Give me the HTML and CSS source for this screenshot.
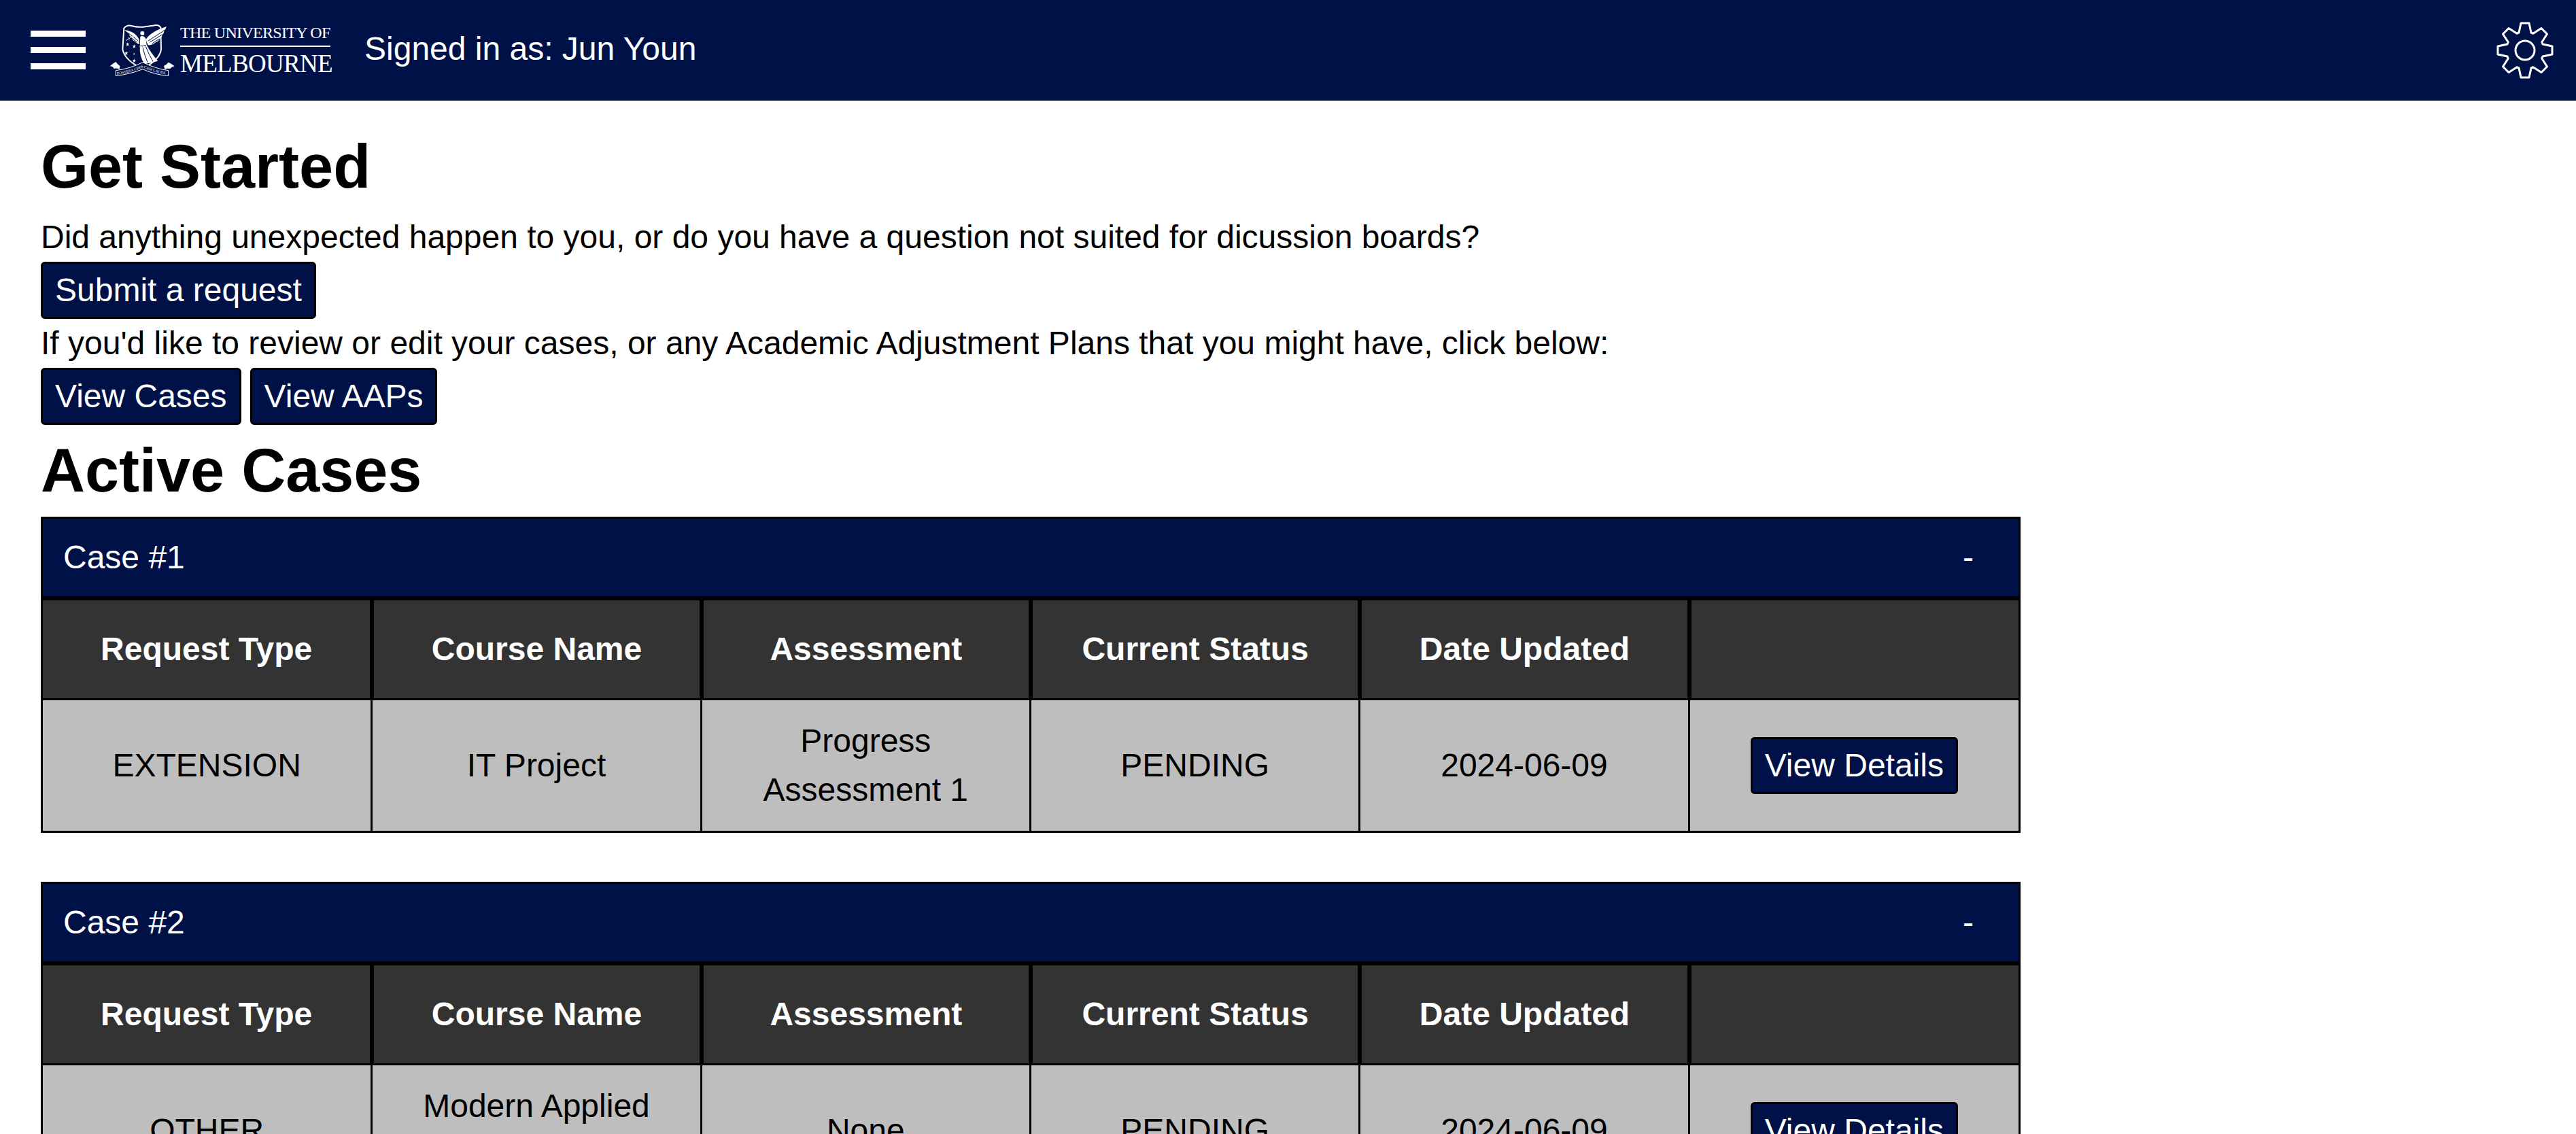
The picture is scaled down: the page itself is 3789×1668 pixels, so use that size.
FILE: index.html
```html
<!DOCTYPE html>
<html lang="en">
  <head>
    <meta charset="UTF-8" />
    <meta name="viewport" content="width=device-width, initial-scale=1.0" />
    <title>Home | Special Consideration</title>
    <link rel="stylesheet" href="styles.css">
  </head>

  <body>
    <header class="topbar">
      <div class="topbar-left">
        <button class="menu-btn" aria-label="Menu">
          <span></span>
          <span></span>
          <span></span>
        </button>
        <div class="logo">
          <svg class="crest" viewBox="15 25 300 240" aria-hidden="true">
            <!-- shield -->
            <path class="crest-line" d="M82 48 Q96 30 118 38 Q140 44 165 42 Q200 38 222 34 Q236 32 244 44 L246 140 Q242 185 165 226 Q85 190 76 140 Z" />
            <!-- wings -->
            <path class="crest-fill" d="M178 98 Q200 62 270 40 Q266 52 258 60 Q262 64 250 78 Q252 82 238 96 Q236 104 222 110 Q208 124 188 122 Z" />
            <path class="crest-fill" d="M150 100 Q132 60 84 56 Q98 66 104 72 Q104 80 114 88 Q118 100 130 106 Q140 116 150 118 Z" />
            <path class="crest-cut" d="M188 104 L262 56 M196 110 L250 76 M206 116 L238 94 M146 104 L100 68 M140 110 L112 88" />
            <!-- figure -->
            <circle class="crest-fill" cx="163" cy="70" r="9" />
            <path class="crest-fill" d="M154 84 Q168 78 178 92 L182 120 Q196 150 232 192 Q204 200 172 206 Q150 170 152 130 Z" />
            <path class="crest-cut" d="M165 132 Q172 165 186 198 M178 128 Q190 160 210 194 M154 126 Q165 128 180 122" />
            <path class="crest-branch" d="M92 102 L128 76 M100 88 L108 96 M112 80 L118 88" />
            <!-- stars -->
            <path class="crest-fill" d="M98 110l2 6 6 0-5 4 2 7-5-4-5 4 2-7-5-4 6 0z M127 119l2 6 6 0-5 4 2 7-5-4-5 4 2-7-5-4 6 0z M92 149l2 6 6 0-5 4 2 7-5-4-5 4 2-7-5-4 6 0z M127 182l2 6 6 0-5 4 2 7-5-4-5 4 2-7-5-4 6 0z M127 156l1 3 3 0-2 2 1 4-3-2-3 2 1-4-2-2 3 0z" />
            <!-- motto scroll -->
            <path class="crest-fill" d="M20 215 Q32 204 46 196 Q52 206 64 214 L62 228 Q48 222 38 226 Q34 216 20 215 Z" />
            <path class="crest-fill" d="M305 215 Q290 202 278 198 Q270 208 258 214 L262 228 Q276 224 286 226 Q292 216 305 215 Z" />
            <path class="crest-band" d="M46 234 Q110 226 165 198 Q220 226 278 234 L278 258 Q215 252 165 228 Q110 250 46 258 Z" />
            <path id="motto-curve" class="crest-guide" d="M52 253 Q112 244 165 221 Q218 244 276 253" />
            <text class="crest-motto"><textPath href="#motto-curve">POSTERA CRESCAM LAUDE</textPath></text>
          </svg>
          <div class="wordmark">
            <span class="wordmark-top">THE UNIVERSITY OF</span>
            <span class="wordmark-bottom">MELBOURNE</span>
          </div>
        </div>
        <span class="signed-in">Signed in as: Jun Youn</span>
      </div>
      <button class="settings-btn" aria-label="Settings">
        <svg viewBox="-42 -42 84 84" aria-hidden="true">
          <circle cx="0" cy="0" r="14" />
          <path d="M-9 -26 L-6 -40 L6 -40 L9 -26 L12 -24.75 L24 -32.5 L32.5 -24 L24.75 -12 L26 -9 L40 -6 L40 6 L26 9 L24.75 12 L32.5 24 L24 32.5 L12 24.75 L9 26 L6 40 L-6 40 L-9 26 L-12 24.75 L-24 32.5 L-32.5 24 L-24.75 12 L-26 9 L-40 6 L-40 -6 L-26 -9 L-24.75 -12 L-32.5 -24 L-24 -32.5 L-12 -24.75 Z" />
        </svg>
      </button>
    </header>

    <main class="content">
      <h1>Get Started</h1>
      <p>Did anything unexpected happen to you, or do you have a question not suited for dicussion boards?</p>
      <div class="btn-row">
        <a href="#" class="btn">Submit a request</a>
      </div>
      <p>If you'd like to review or edit your cases, or any Academic Adjustment Plans that you might have, click below:</p>
      <div class="btn-row">
        <a href="#" class="btn">View Cases</a>
        <a href="#" class="btn">View AAPs</a>
      </div>
      <h1>Active Cases</h1>

      <section class="case">
        <div class="case-head">
          <span>Case #1</span>
          <span class="case-toggle">-</span>
        </div>
        <table>
          <thead>
            <tr>
              <th>Request Type</th>
              <th>Course Name</th>
              <th>Assessment</th>
              <th>Current Status</th>
              <th>Date Updated</th>
              <th></th>
            </tr>
          </thead>
          <tbody>
            <tr>
              <td>EXTENSION</td>
              <td>IT Project</td>
              <td>Progress Assessment 1</td>
              <td>PENDING</td>
              <td>2024-06-09</td>
              <td><a href="#" class="btn">View Details</a></td>
            </tr>
          </tbody>
        </table>
      </section>

      <section class="case">
        <div class="case-head">
          <span>Case #2</span>
          <span class="case-toggle">-</span>
        </div>
        <table>
          <thead>
            <tr>
              <th>Request Type</th>
              <th>Course Name</th>
              <th>Assessment</th>
              <th>Current Status</th>
              <th>Date Updated</th>
              <th></th>
            </tr>
          </thead>
          <tbody>
            <tr>
              <td>OTHER</td>
              <td>Modern Applied Statistics</td>
              <td>None</td>
              <td>PENDING</td>
              <td>2024-06-09</td>
              <td><a href="#" class="btn">View Details</a></td>
            </tr>
          </tbody>
        </table>
      </section>
    </main>
  </body>
</html>
```

FILE: styles.css
```css
* {
  margin: 0;
  padding: 0;
  box-sizing: border-box;
}

html,
body {
  height: 100%;
  overflow: hidden;
}

body {
  font-family: "Liberation Sans", Arial, sans-serif;
  font-size: 48px;
  line-height: 1.5;
  color: #000;
  background-color: #fff;
}

.topbar {
  display: flex;
  justify-content: space-between;
  align-items: center;
  height: 148px;
  padding: 0 33px 1px 45px;
  background-color: #001147;
  color: #fff;
}

.topbar-left {
  display: flex;
  align-items: center;
}

.menu-btn {
  display: flex;
  flex-direction: column;
  gap: 15px;
  width: 81px;
  background: none;
  border: none;
}

.menu-btn span {
  display: block;
  height: 9px;
  background-color: #fff;
}

.logo {
  display: flex;
  align-items: center;
  margin-left: 34px;
}

.crest {
  width: 100px;
  height: 80px;
}

.crest-line {
  fill: none;
  stroke: #fff;
  stroke-width: 6;
}

.crest-fill {
  fill: #fff;
}

.crest-cut {
  fill: none;
  stroke: #001147;
  stroke-width: 3;
}

.crest-branch {
  fill: none;
  stroke: #fff;
  stroke-width: 3;
}

.crest-band {
  fill: #001147;
  stroke: #fff;
  stroke-width: 3;
}

.crest-guide {
  fill: none;
}

.crest-motto {
  font-family: "Liberation Serif", serif;
  font-size: 17px;
  fill: #fff;
}

.wordmark {
  display: flex;
  flex-direction: column;
  width: 221px;
  margin-left: 5px;
  padding-top: 2px;
  font-family: "Liberation Serif", "Times New Roman", serif;
  white-space: nowrap;
}

.wordmark-top {
  padding-bottom: 6px;
  border-bottom: 2px solid #fff;
  font-size: 24px;
  line-height: 26px;
  letter-spacing: -0.7px;
}

.wordmark-bottom {
  margin-top: 5px;
  font-size: 37px;
  line-height: 40px;
  letter-spacing: -0.7px;
}

.signed-in {
  margin-left: 50px;
  padding-bottom: 4px;
  line-height: 55px;
}

.settings-btn {
  display: flex;
  width: 84px;
  height: 84px;
  background: none;
  border: none;
}

.settings-btn svg {
  width: 84px;
  height: 84px;
  fill: none;
  stroke: #fff;
  stroke-width: 3;
  stroke-linejoin: round;
}

.content {
  padding: 30px 60px 0;
}

h1 {
  font-size: 90px;
}

.btn-row {
  display: flex;
  gap: 13px;
}

.btn {
  display: inline-block;
  vertical-align: top;
  padding: 11px 18px;
  background-color: #001147;
  border: 3px solid #000;
  border-radius: 6px;
  color: #fff;
  line-height: 56px;
  text-decoration: none;
}

.case {
  width: 2912px;
  margin-bottom: 72px;
  border: 3px solid #000;
}

.case-head {
  display: flex;
  justify-content: space-between;
  align-items: center;
  height: 120px;
  padding: 0 66px 0 30px;
  background-color: #001147;
  color: #fff;
  border-bottom: 6px solid #000;
}

table {
  width: 100%;
  table-layout: fixed;
  border-collapse: separate;
  border-spacing: 0;
  text-align: center;
}

th {
  height: 147px;
  background-color: #333;
  color: #fff;
  border-left: 3px solid #000;
  border-right: 3px solid #000;
  border-bottom: 3px solid #000;
}

td {
  height: 192px;
  padding: 24px;
  background-color: #bebebe;
  border-left: 1px solid #000;
  border-right: 2px solid #000;
}

th:first-child,
td:first-child {
  border-left: none;
}

th:last-child,
td:last-child {
  border-right: none;
}
```
